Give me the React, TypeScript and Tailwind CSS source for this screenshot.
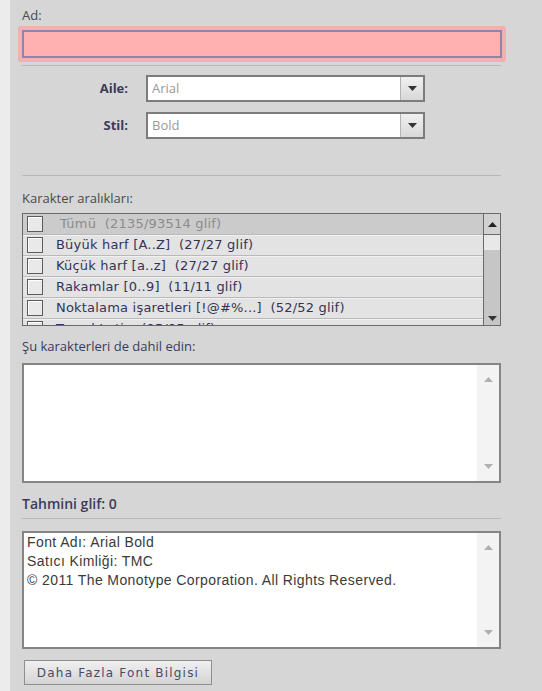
import { useState } from 'react';

interface GlyphRange {
  id: string;
  label: string;
  disabled?: boolean;
}

const ranges: GlyphRange[] = [
  { id: 'all', label: 'Tümü  (2135/93514 glif)', disabled: true },
  { id: 'upper', label: 'Büyük harf [A..Z]  (27/27 glif)' },
  { id: 'lower', label: 'Küçük harf [a..z]  (27/27 glif)' },
  { id: 'digits', label: 'Rakamlar [0..9]  (11/11 glif)' },
  { id: 'punct', label: 'Noktalama işaretleri [!@#%...]  (52/52 glif)' },
  { id: 'latin', label: 'Temel Latin  (95/95 glif)' },
];

const uiFont = { fontFamily: '"Open Sans", "Noto Sans", sans-serif' };
const listFont = { fontFamily: '"DejaVu Sans", Verdana, sans-serif' };

function Caret({ up = false, className = '' }: { up?: boolean; className?: string }) {
  return (
    <svg width="9" height="5" viewBox="0 0 9 5" className={className}>
      <polygon points={up ? '0,5 9,5 4.5,0' : '0,0 9,0 4.5,5'} fill="currentColor" />
    </svg>
  );
}

function SelectBox({ value }: { value: string }) {
  return (
    <div className="flex h-[27px] w-[279px] border-2 border-[#7c7c7c] bg-white">
      <div className="flex flex-1 items-center pl-[4px] text-[13px] text-[#9a9a9a]">{value}</div>
      <div className="flex w-[23px] items-center justify-center border-l border-[#b4b4b4] bg-gradient-to-b from-[#f0f0f0] to-[#d8d8d8] text-[#333]">
        <Caret />
      </div>
    </div>
  );
}

function TextBox({ height, children }: { height: string; children?: React.ReactNode }) {
  return (
    <div className={`flex w-[479px] border-2 border-[#858585] bg-white ${height}`}>
      <div className="flex-1 overflow-hidden px-[2px]">{children}</div>
      <div className="flex w-[22px] flex-col items-center justify-between bg-[#f3f3f3] py-[12px] text-[#b0b0b0]">
        <Caret up />
        <Caret />
      </div>
    </div>
  );
}

export default function App() {
  const [checked, setChecked] = useState<Record<string, boolean>>({});
  const [name, setName] = useState('');

  return (
    <div className="flex h-[691px] w-[542px] bg-[#ececec]" style={uiFont}>
      <div className="ml-[10px] flex-1 bg-[#d6d6d6] pl-[12px] text-[13px] text-[#33334d]">
        <div className="mt-[7px] h-[16px] leading-[16px] text-[#4a4a4a]">Ad:</div>

        {/* name field, flagged as required */}
        <div className="-ml-[4px] mt-[3px] w-[488px] rounded-[2px] bg-[#f2b0b0] p-[4px]">
          <input
            value={name}
            onChange={(e) => setName(e.target.value)}
            className="block h-[28px] w-full border-2 border-[#8f84aa] bg-[#ffb0b0] outline-none"
          />
        </div>

        <div className="mt-[3px] h-px w-[479px] bg-[#b8b8b8]" />

        <div className="mt-[9px] flex items-center">
          <div className="w-[106px] text-right font-bold text-[#3b3b5c]">Aile:</div>
          <div className="ml-[18px]">
            <SelectBox value="Arial" />
          </div>
        </div>
        <div className="mt-[10px] flex items-center">
          <div className="w-[106px] text-right font-bold text-[#3b3b5c]">Stil:</div>
          <div className="ml-[18px]">
            <SelectBox value="Bold" />
          </div>
        </div>

        <div className="mt-[36px] h-px w-[479px] bg-[#b8b8b8]" />

        <div className="mt-[14px] h-[16px] leading-[16px] text-[#4a4a4a]">Karakter aralıkları:</div>

        {/* glyph range list */}
        <div className="mt-[7px] flex h-[113px] w-[479px] overflow-hidden border border-[#6a6a6a] bg-[#e2e2e2]">
          <div className="flex-1 overflow-hidden text-[13px] tracking-[0.2px]" style={listFont}>
            {ranges.map((r, i) => (
              <div
                key={r.id}
                className={`flex h-[21px] items-center border-b border-[#b9b9b9] pl-[4px] ${
                  i === 0 ? 'bg-[#cbcbcb]' : 'bg-[#e3e3e3] shadow-[inset_0_1px_0_#f1f1f1]'
                }`}
              >
                <button
                  onClick={() => setChecked({ ...checked, [r.id]: !checked[r.id] })}
                  className="h-[16px] w-[16px] shrink-0 border border-[#5c5c5c] bg-[#e9e9e9] shadow-[inset_1px_1px_0_#ffffff]"
                />
                <span
                  className={`whitespace-pre ${i === 0 ? 'ml-[17px] text-[#8c8c8c]' : 'ml-[13px] text-[#33335a]'}`}
                >
                  {r.label}
                </span>
              </div>
            ))}
          </div>
          <div className="flex w-[17px] flex-col border-l border-[#6a6a6a] bg-[#c6c6c6]">
            <div className="flex h-[21px] items-center justify-center border-b border-[#6a6a6a] bg-[#d2d2d2] text-[#222]">
              <Caret up />
            </div>
            <div className="h-[15px] bg-[#e8e8e8]" />
            <div className="flex flex-1 items-end justify-center pb-[4px] text-[#333]">
              <Caret />
            </div>
          </div>
        </div>

        <div className="mt-[12px] h-[16px] leading-[16px] text-[#3b3b5c]">Şu karakterleri de dahil edin:</div>

        <div className="mt-[9px]">
          <TextBox height="h-[120px]" />
        </div>

        <div className="mt-[13px] h-[16px] text-[14px] font-semibold leading-[16px] text-[#3b3b5c]">Tahmini glif: 0</div>

        <div className="mt-[6px] h-px w-[479px] bg-[#b8b8b8]" />

        <div className="mt-[12px]">
          <TextBox height="h-[118px]">
            <div
              className="pl-[1px] text-[14px] leading-[19px] tracking-[0.4px] text-[#3a3a3a]"
              style={{ fontFamily: '"Liberation Sans", Arial, sans-serif' }}
            >
              <div>Font Adı: Arial Bold</div>
              <div>Satıcı Kimliği: TMC</div>
              <div>© 2011 The Monotype Corporation. All Rights Reserved.</div>
            </div>
          </TextBox>
        </div>

        <button
          className="ml-[2px] mt-[11px] flex h-[25px] w-[188px] items-center justify-center border border-[#8e8e8e] bg-gradient-to-b from-[#f0f0f0] to-[#d4d4d4] text-[12px] tracking-[0.1em] text-[#4a4a6a]"
          style={listFont}
        >
          Daha Fazla Font Bilgisi
        </button>
      </div>
    </div>
  );
}
